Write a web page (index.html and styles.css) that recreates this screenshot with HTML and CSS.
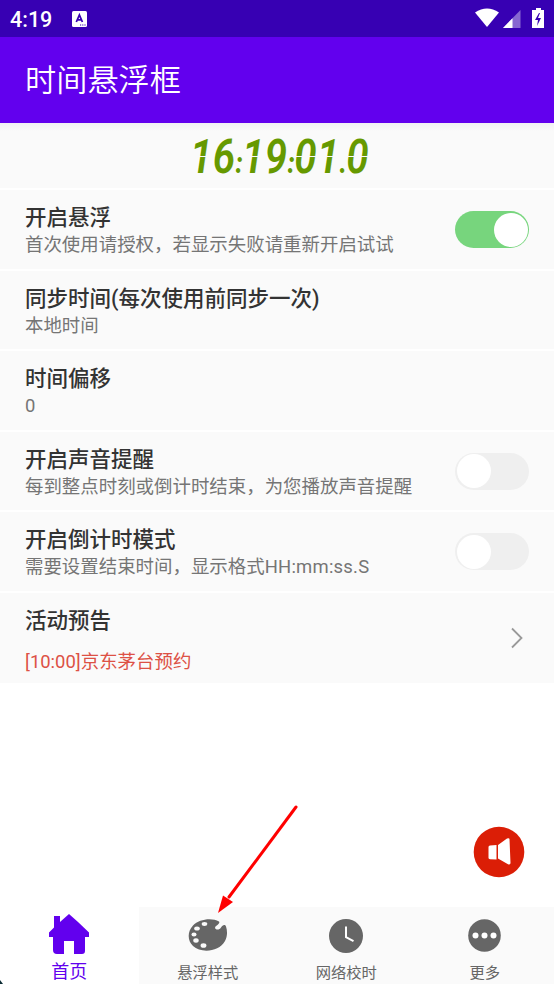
FILE: index.html
```
<!DOCTYPE html>
<html lang="zh-CN">
<head>
<meta charset="utf-8">
<title>时间悬浮框</title>
<link rel="stylesheet" href="styles.css">
</head>
<body>
<div class="screen">
  <header class="status">
    <span class="status-time">4:19</span>
    <svg class="status-app" width="15" height="16" viewBox="0 0 15 16"><rect width="15" height="16" rx="1.5" fill="#fff"/><path d="M4.3 11 7.4 4l3 7M5.5 8.8h3.8" fill="none" stroke="#3700b3" stroke-width="1.8"/><path d="M8 14h6" stroke="#3700b3" stroke-dasharray="1.2 1"/></svg>
    <svg class="status-icons" width="70" height="21" viewBox="0 0 70 21"><path d="M0 4.5Q12-3.500 24 4.500L12 19Z" fill="#fff"/><path d="M28 20 45.500 2V20Z" fill="#8766d1"/><path d="M28 20 37.500 10.200V20Z" fill="#fff"/><path d="M58 2h3V0h5v2h3v18H57V2Z" fill="#fff"/><path d="m64 5-4 7h3l-1 6 4-8h-3l2-5Z" fill="#3700b3"/></svg>
  </header>
  <div class="appbar">时间悬浮框</div>
  <main>
    <div class="clock"><div class="digits"><span class="split">1</span><span>6</span><i>:</i><span class="split">1</span><span>9</span><i>:</i><span class="split">0</span><span class="split">1</span><i>.</i><span class="split">0</span></div></div>
    <section class="row"><div><h2>开启悬浮</h2><p>首次使用请授权，若显示失败请重新开启试试</p></div><div class="switch on"></div></section>
    <section class="row"><div><h2>同步时间(每次使用前同步一次)</h2><p>本地时间</p></div></section>
    <section class="row"><div><h2>时间偏移</h2><p>0</p></div></section>
    <section class="row"><div><h2>开启声音提醒</h2><p>每到整点时刻或倒计时结束，为您播放声音提醒</p></div><div class="switch"></div></section>
    <section class="row"><div><h2>开启倒计时模式</h2><p>需要设置结束时间，显示格式<span class="format">HH:mm:ss.S</span></p></div><div class="switch"></div></section>
    <section class="row notice"><div><h2>活动预告</h2><p>[10:00]京东茅台预约</p></div><svg class="chevron" width="12" height="22" viewBox="0 0 12 22"><path d="m1 1.500 9.500 9.500L1 20.500" fill="none" stroke="#999" stroke-width="1.800"/></svg></section>
  </main>
  <nav>
    <div class="tab active"><svg width="42" height="42" viewBox="0 0 42 42"><path d="M21 0 30 8 41 18.500V23H37V37Q37 40 34 40H26V27H16V40H9Q5 40 5 36V23H1V18.500L6 13.500V2H12V8Z" fill="#6200ee"/></svg><span>首页</span></div>
    <div class="tab"><svg width="40" height="32" viewBox="0 0 40 32"><path d="M31 2.500C24-1.500 11 0 5 6.500C-1 13-.5 22 5 27C13 34.500 31 33 37 22C39.500 17 39.500 12 38 7.500C37 5 34.500 6 33 8.500C31 12 25.500 10.500 27.500 7.500C28.500 6 32.500 4.500 31 2.500Z" fill="#666"/><g fill="#fafafa"><ellipse cx="16.500" cy="5" rx="2.800" ry="1.900"/><ellipse cx="9" cy="9.500" rx="2.800" ry="2"/><ellipse cx="6" cy="15.500" rx="2.500" ry="2.100"/><ellipse cx="8" cy="21.500" rx="2.700" ry="2.200"/><ellipse cx="15.500" cy="26.500" rx="2.900" ry="2.300"/></g></svg><span>悬浮样式</span></div>
    <div class="tab"><svg width="34" height="34" viewBox="0 0 34 34"><circle cx="17" cy="17" r="17" fill="#666"/><path d="M17 7.500v10.700l7.500 4" fill="none" stroke="#fff" stroke-width="2"/></svg><span>网络校时</span></div>
    <div class="tab"><svg width="33" height="33" viewBox="0 0 33 33"><circle cx="16.500" cy="16.500" r="16.300" fill="#666"/><g fill="#fff"><circle cx="7.500" cy="16.500" r="3"/><circle cx="16.500" cy="16.500" r="3"/><circle cx="25.500" cy="16.500" r="3"/></g></svg><span>更多</span></div>
  </nav>
  <svg class="fab" width="52" height="52" viewBox="0 0 52 52"><circle cx="26" cy="26" r="25.300" fill="#db1e06"/><path d="M17 19.500 23.500 19v14.500l-6.500-.3q-1.500-.2-1.500-1.200V21q0-1.500 1.500-1.500ZM25 19l9-6.500q2.500-1 2.500.8L37.500 37q0 2-2.500 1.200L25 32.500Z" fill="#fff"/></svg>
  <svg class="arrow" width="82" height="110" viewBox="0 0 82 110"><path d="M79 3 12 93" stroke="#f00" stroke-width="3" stroke-linecap="round"/><path d="M1 109 6 91.500 16 98Z" fill="#f00"/></svg>
  <svg class="corner" width="3" height="4" viewBox="0 0 3 4"><path d="M0 0 3 4H0Z" fill="#0b2b33"/></svg>
</div>
</body>
</html>
```
FILE: styles.css
```
* { box-sizing: border-box; }
body {
  margin: 0;
  background: #fff;
  font-family: Roboto, "Noto Sans CJK SC", sans-serif;
}
.screen {
  position: relative;
  display: flex;
  flex-direction: column;
  width: 554px;
  height: 984px;
  overflow: hidden;
}
.status {
  display: flex;
  align-items: center;
  height: 37px;
  padding: 1px 10px 0;
  background: #3700b3;
  color: #fff;
}
.status-time { width: 62px; font-size: 21.5px; font-weight: 500; }
.status-icons { margin-left: auto; margin-right: -1px; margin-bottom: 2px; }
.appbar {
  height: 86px;
  padding-left: 25px;
  background: #6200ee;
  color: #fff;
  font-size: 31.2px;
  font-weight: 350;
  line-height: 88px;
}
.clock {
  display: flex;
  justify-content: center;
  height: 65px;
  padding-left: 5px;
  background: linear-gradient(#f1f1f4, #fafafa 8px);
  color: #669900;
  font-size: 48px;
  font-style: italic;
  font-weight: 600;
  line-height: 67px;
}
.digits { display: flex; align-items: baseline; transform: scaleX(.84); }
.digits span { position: relative; width: 27px; }
.digits i { width: 8px; font-size: 29px; font-weight: 900; line-height: 1; }
.split::after {
  content: "";
  position: absolute;
  left: 0;
  top: 33px;
  width: 27px;
  height: 1px;
  background: #fafafa;
}
.row {
  display: flex;
  justify-content: space-between;
  height: 80.5px;
  padding: 14px 25px 0;
  border-top: 2px solid #fff;
  background: #fafafa;
}
h2, p { margin: 0; white-space: nowrap; }
h2 { color: #333; font-size: 21.5px; font-weight: 500; line-height: 28px; }
p { color: #757575; font-size: 18.44px; line-height: 26px; }
.format { letter-spacing: .22px; }
.switch {
  width: 74px;
  height: 37px;
  margin-top: 7px;
  padding: 1.5px;
  border-radius: 19px;
  background: #efefef;
}
.switch::before {
  content: "";
  display: block;
  width: 34px;
  height: 34px;
  border-radius: 50%;
  background: #fff;
}
.switch.on { background: #77d57d; }
.switch.on::before { margin-left: 37px; }
.notice { height: 92.5px; }
.notice p { margin-top: 14px; color: #dd5145; }
.chevron { margin: 20px 6px 0 0; }
nav {
  display: grid;
  grid-template-columns: repeat(4, 1fr);
  height: 77px;
  margin-top: auto;
  background: #fafafa;
}
.tab {
  display: flex;
  flex-direction: column;
  align-items: center;
  justify-content: space-between;
  padding: 12px 0 1px;
  color: #666;
  font-size: 15.3px;
  line-height: 20px;
}
.tab.active { padding: 7px 0 0; background: #fff; color: #6200ee; font-size: 18px; line-height: 24px; }
.fab { position: absolute; left: 472.5px; top: 825.5px; }
.arrow { position: absolute; left: 217px; top: 804px; }
.corner { position: absolute; left: 0; bottom: 0; }
```
